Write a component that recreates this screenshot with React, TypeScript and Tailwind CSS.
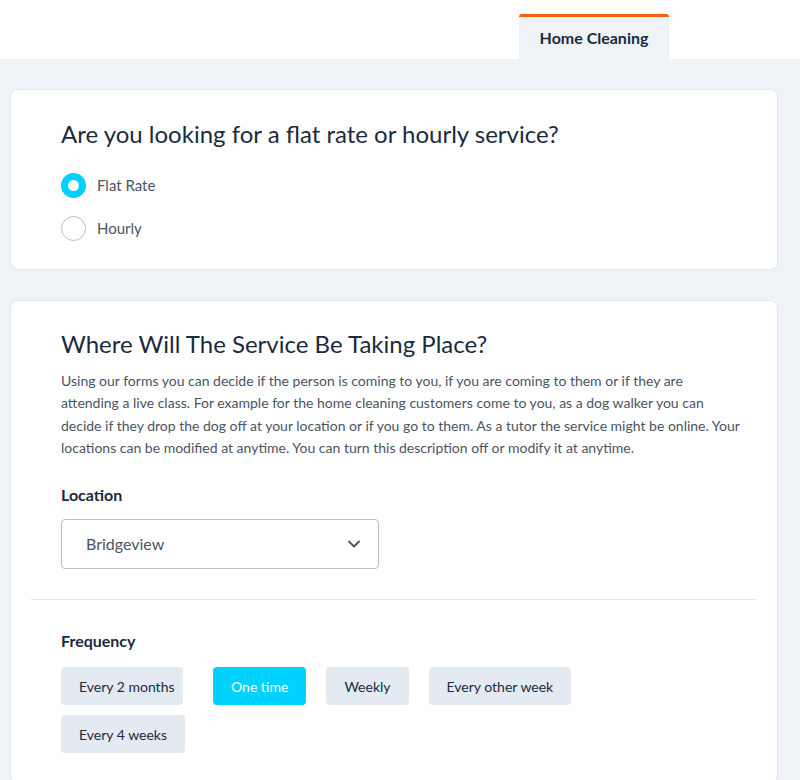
import React, { useState } from 'react';
import { ChevronDown } from 'lucide-react';

const frequencies = ['Every 2 months', 'One time', 'Weekly', 'Every other week', 'Every 4 weeks'];

const Radio = ({ checked, label, onClick }: { checked: boolean; label: string; onClick: () => void }) => (
  <button type="button" onClick={onClick} className="flex items-center gap-[11px] h-[26px]">
    <span
      className={`w-[25px] h-[25px] rounded-full flex items-center justify-center ${
        checked ? 'bg-[#00cfff]' : 'border border-[#b8c0ca] bg-white'
      }`}
    >
      {checked && <span className="w-[11px] h-[11px] rounded-full bg-white" />}
    </span>
    <span className="text-[15px] text-[#4a5563]">{label}</span>
  </button>
);

export default function App() {
  const [rate, setRate] = useState('flat');
  const [freq, setFreq] = useState('One time');

  return (
    <div className="min-h-[780px] bg-[#eff3f7] font-['Lato','Noto_Sans',sans-serif] text-[#1b2b3e]">
      {/* Tabs */}
      <div className="h-[59px] bg-white flex items-end pl-[519px]">
        <div className="w-[150px] h-[45px] bg-[#eff3f7] border-t-[3px] border-[#ff5d12] rounded-t-[3px] flex items-center justify-center">
          <span className="text-[16px] font-bold text-[#1b2b3e]">Home Cleaning</span>
        </div>
      </div>

      <div className="pl-[10px] pr-[22px] pt-[30px] flex flex-col gap-[30px]">
        {/* Rate type */}
        <div className="bg-white border border-[#e2e7ec] rounded-[8px] h-[181px] px-[50px] pt-[28px]">
          <h2 className="text-[24px] leading-[32px] text-[#1b2b3e]">Are you looking for a flat rate or hourly service?</h2>
          <div className="mt-[22px] flex flex-col gap-[17px]">
            <Radio checked={rate === 'flat'} label="Flat Rate" onClick={() => setRate('flat')} />
            <Radio checked={rate === 'hourly'} label="Hourly" onClick={() => setRate('hourly')} />
          </div>
        </div>

        {/* Location */}
        <div className="bg-white border border-[#e2e7ec] rounded-[8px] px-[20px] pt-[27px] pb-[30px]">
          <div className="pl-[30px] pr-[10px]">
            <h2 className="text-[24px] leading-[32px] text-[#1b2b3e]">Where Will The Service Be Taking Place?</h2>
            <p className="mt-[10px] w-[680px] text-[14px] leading-[22.3px] text-[#4a5563]">
              Using our forms you can decide if the person is coming to you, if you are coming to them or if they are
              attending a live class. For example for the home cleaning customers come to you, as a dog walker you can
              decide if they drop the dog off at your location or if you go to them. As a tutor the service might be online. Your
              locations can be modified at anytime. You can turn this description off or modify it at anytime.
            </p>
            <div className="mt-[24px] text-[16px] font-bold leading-[24px]">Location</div>
            <div className="mt-[12px] w-[318px] h-[50px] border border-[#b8bec6] rounded-[4px] flex items-center justify-between pl-[24px] pr-[14px]">
              <span className="text-[16px] text-[#4a5563]">Bridgeview</span>
              <ChevronDown size={20} strokeWidth={2.2} className="text-[#4a5563]" />
            </div>
          </div>

          <div className="mt-[30px] border-t border-[#e2e7ec]" />

          <div className="px-[30px] pt-[29px]">
            <div className="text-[16px] font-bold leading-[24px]">Frequency</div>
            <div className="mt-[14px] flex flex-wrap gap-x-[20px] gap-y-[10px] w-[560px]">
              {frequencies.map((f, i) => (
                <button
                  key={f}
                  type="button"
                  onClick={() => setFreq(f)}
                  className={`h-[38px] px-[18px] rounded-[4px] text-[14px] whitespace-nowrap ${
                    i === 0 ? 'w-[122px] px-0 mr-[10px]' : ''
                  } ${freq === f ? 'bg-[#00d2ff] text-white' : 'bg-[#e3eaf1] text-[#1b2b3e]'}`}
                >
                  {f}
                </button>
              ))}
            </div>
          </div>
        </div>
      </div>
    </div>
  );
}
